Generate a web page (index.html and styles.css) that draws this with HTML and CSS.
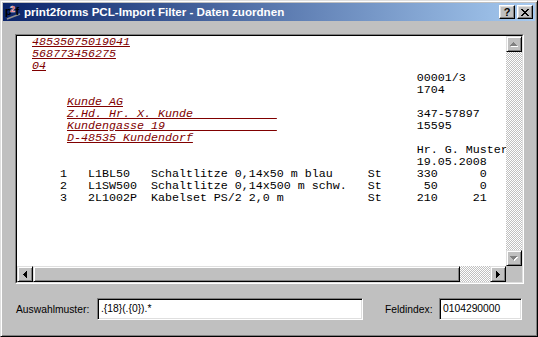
FILE: index.html
```html
<!DOCTYPE html>
<html lang="de">
<head>
<meta charset="utf-8">
<title>print2forms PCL-Import Filter - Daten zuordnen</title>
<link rel="stylesheet" href="styles.css">
</head>
<body>
<div class="window">
  <div class="caption">
    <svg class="app-icon" viewBox="0 0 16 16" aria-hidden="true">
      <path d="M2 15 L15 10" stroke="#909090" stroke-width="1.6" fill="none"/>
      <text x="0" y="11" class="ic-p">p</text>
      <text x="5" y="8" class="ic-2">2</text>
      <text x="10.5" y="11" class="ic-f">f</text>
    </svg>
    <span class="title">print2forms PCL-Import Filter - Daten zuordnen</span>
    <div class="cap-btn help">?</div>
    <div class="cap-btn close">
      <svg width="8" height="7" viewBox="0 0 8 7" shape-rendering="crispEdges" aria-hidden="true">
        <path d="M0 0h2v1h-2zM6 0h2v1h-2zM1 1h2v1h-2zM5 1h2v1h-2zM2 2h4v1h-4zM3 3h2v1h-2zM2 4h4v1h-4zM1 5h2v1h-2zM5 5h2v1h-2zM0 6h2v1h-2zM6 6h2v1h-2z" fill="#000"/>
      </svg>
    </div>
  </div>
  <div class="client">
    <div class="panel">
      <div class="panel-inner">
        <div class="viewer">
<pre class="doc"><span class="u">48535075019041</span>
<span class="u">568773456275</span>
<span class="u">04</span>
                                                       00001/3
                                                       1704
     <span class="u">Kunde AG</span>
     <span class="u">Z.Hd. Hr. X. Kunde            </span>                    347-57897
     <span class="u">Kundengasse 19                </span>                    15595
     <span class="u">D-48535 Kundendorf</span>
                                                       Hr. G. Muster
                                                       19.05.2008
    1   L1BL50   Schaltlitze 0,14x50 m blau     St     330      0
    2   L1SW500  Schaltlitze 0,14x500 m schw.   St      50      0
    3   2L1002P  Kabelset PS/2 2,0 m            St     210     21</pre>
        </div>
        <div class="vscroll">
          <div class="sb-btn">
            <svg width="8" height="5" viewBox="0 0 8 5" shape-rendering="crispEdges" aria-hidden="true">
              <path d="M4 1h1v1h-1zM3 2h3v1h-3zM2 3h5v1h-5zM1 4h7v1h-7z" fill="#fff"/>
              <path d="M3 0h1v1h-1zM2 1h3v1h-3zM1 2h5v1h-5zM0 3h7v1h-7z" fill="#808080"/>
            </svg>
          </div>
          <div class="track"></div>
          <div class="sb-btn">
            <svg width="8" height="5" viewBox="0 0 8 5" shape-rendering="crispEdges" aria-hidden="true">
              <path d="M1 1h7v1h-7zM2 2h5v1h-5zM3 3h3v1h-3zM4 4h1v1h-1z" fill="#fff"/>
              <path d="M0 0h7v1h-7zM1 1h5v1h-5zM2 2h3v1h-3zM3 3h1v1h-1z" fill="#808080"/>
            </svg>
          </div>
        </div>
        <div class="hscroll">
          <div class="sb-btn">
            <svg width="4" height="7" viewBox="0 0 4 7" shape-rendering="crispEdges" aria-hidden="true">
              <path d="M0 3h1v1h-1zM1 2h1v3h-1zM2 1h1v5h-1zM3 0h1v7h-1z" fill="#000"/>
            </svg>
          </div>
          <div class="thumb"></div>
          <div class="track"></div>
          <div class="sb-btn">
            <svg width="4" height="7" viewBox="0 0 4 7" shape-rendering="crispEdges" aria-hidden="true">
              <path d="M0 0h1v7h-1zM1 1h1v5h-1zM2 2h1v3h-1zM3 3h1v1h-1z" fill="#000"/>
            </svg>
          </div>
        </div>
        <div class="corner"></div>
      </div>
    </div>
    <div class="fields">
      <span class="label lbl-pattern">Auswahlmuster:</span>
      <div class="field field-pattern">.{18}(.{0}).*</div>
      <span class="label lbl-index">Feldindex:</span>
      <div class="field field-index">0104290000</div>
    </div>
  </div>
</div>
</body>
</html>
```

FILE: styles.css
```css
* { box-sizing: border-box; }
html, body { margin: 0; padding: 0; }
body {
  width: 538px;
  height: 337px;
  overflow: hidden;
  background: #c0c0c0;
  font-family: "Liberation Sans", Arial, sans-serif;
}
.window {
  width: 538px;
  height: 337px;
  border: 1px solid;
  border-color: #dfdfdf #000 #000 #dfdfdf;
  box-shadow: inset 1px 1px #fff, inset -1px -1px #808080;
  padding: 2px;
  display: flex;
  flex-direction: column;
  background: #c0c0c0;
}
.caption {
  height: 18px;
  flex: none;
  display: flex;
  align-items: center;
  background: linear-gradient(to right, #0a246a, #a6caf0);
  color: #fff;
}
.app-icon {
  width: 16px;
  height: 16px;
  margin-left: 2px;
  margin-right: 3px;
  flex: none;
}
.ic-p, .ic-f {
  font: bold 11px "Liberation Sans", Arial, sans-serif;
  fill: #000;
}
.ic-2 {
  font: bold 9px "Liberation Sans", Arial, sans-serif;
  fill: #d00000;
  stroke: #fff;
  stroke-width: 0.4px;
}
.title {
  flex: 1;
  white-space: nowrap;
  font-weight: bold;
  font-size: 11.6px;
  line-height: 18px;
}
.cap-btn {
  width: 16px;
  height: 14px;
  flex: none;
  background: #c0c0c0;
  border: 1px solid;
  border-color: #fff #000 #000 #fff;
  box-shadow: inset -1px -1px #808080, inset 1px 1px #dfdfdf;
  display: flex;
  align-items: center;
  justify-content: center;
  color: #000;
}
.help {
  font-weight: bold;
  font-size: 11px;
  line-height: 12px;
  margin-right: 2px;
}
.close {
  margin-right: 2px;
}
.client {
  flex: 1;
  padding: 13px 10px 0 12px;
}
.panel {
  width: 509px;
  height: 250px;
  border: 1px solid;
  border-color: #808080 #fff #fff #808080;
}
.panel-inner {
  width: 100%;
  height: 100%;
  border: 1px solid;
  border-color: #000 #dfdfdf #dfdfdf #000;
  display: grid;
  grid-template-columns: 1fr 16px;
  grid-template-rows: 1fr 16px;
}
.viewer {
  background: #fff;
  overflow: hidden;
}
.doc {
  margin: 0;
  padding: 0 0 0 15px;
  font-family: "Liberation Mono", "DejaVu Sans Mono", monospace;
  font-size: 11.67px;
  line-height: 12px;
  color: #000;
  white-space: pre;
}
.u {
  color: #800000;
  font-style: italic;
  text-decoration: underline;
  text-decoration-color: #800000;
}
.vscroll {
  display: flex;
  flex-direction: column;
}
.hscroll {
  display: flex;
}
.sb-btn {
  width: 16px;
  height: 16px;
  flex: none;
  background: #c0c0c0;
  border: 1px solid;
  border-color: #dfdfdf #000 #000 #dfdfdf;
  box-shadow: inset 1px 1px #fff, inset -1px -1px #808080;
  display: flex;
  align-items: center;
  justify-content: center;
}
.track {
  flex: 1;
  background-color: #fff;
  background-image: conic-gradient(#c0c0c0 25%, transparent 0 50%, #c0c0c0 0 75%, transparent 0);
  background-size: 2px 2px;
}
.thumb {
  width: 427px;
  flex: none;
  background: #c0c0c0;
  border: 1px solid;
  border-color: #dfdfdf #000 #000 #dfdfdf;
  box-shadow: inset 1px 1px #fff, inset -1px -1px #808080;
}
.corner {
  background: #c0c0c0;
}
.fields {
  margin-top: 14px;
  height: 22px;
  display: flex;
  align-items: center;
  padding-left: 1px;
  font-size: 10.3px;
  color: #000;
}
.label {
  flex: none;
  white-space: nowrap;
}
.lbl-pattern { width: 81px; }
.lbl-index { width: 54px; margin-left: 22px; }
.field {
  height: 22px;
  flex: none;
  background: #fff;
  border: 1px solid;
  border-color: #808080 #fff #fff #808080;
  box-shadow: inset 1px 1px #000, inset -1px -1px #dfdfdf;
  padding-left: 3px;
  line-height: 20px;
  white-space: nowrap;
}
.field-pattern { width: 266px; }
.field-index { width: 83px; }
```
